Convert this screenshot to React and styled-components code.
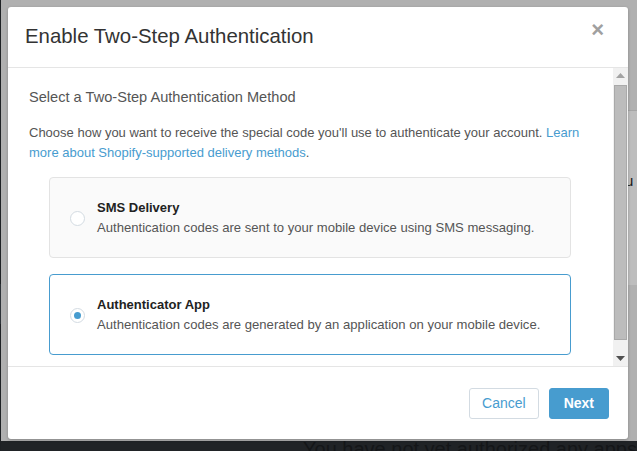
import styled, { createGlobalStyle } from "styled-components";

const GlobalStyle = createGlobalStyle`
  html, body {
    margin: 0;
    padding: 0;
  }
  body {
    font-family: "Liberation Sans", Arial, sans-serif;
    background: #202326;
  }
  * {
    box-sizing: border-box;
  }
`;

const Page = styled.div`
  position: relative;
  width: 637px;
  height: 451px;
  display: flex;
  overflow: hidden;
`;

const Sidebar = styled.div`
  width: 14px;
  background: #1e2124;
  display: flex;
  flex-direction: column;
  padding-top: 284px;
`;

const SideItem = styled.div`
  height: 40px;
  background: #2d3338;
`;

const Main = styled.div`
  flex: 1;
  display: flex;
  flex-direction: column;
`;

const DimTop = styled.div`
  height: 441px;
  background: #b0b0b0;
  display: flex;
  justify-content: flex-end;
`;

const DimCard = styled.div`
  width: 12px;
  margin-top: 110px;
  height: 175px;
  background: #bdbdbd;
  border-top: 1px solid #a5a5a5;
  padding-top: 60px;
  font-size: 15px;
  line-height: 20px;
  color: #1a1a1a;
  overflow: hidden;
  white-space: nowrap;
`;

const DimBottom = styled.div`
  flex: 1;
  background: #202326;
  color: #141618;
  font-size: 20px;
  padding-left: 302px;
  white-space: nowrap;
  overflow: hidden;
  line-height: 16px;
`;

const Modal = styled.div`
  position: absolute;
  left: 8px;
  top: 7px;
  width: 620px;
  height: 432px;
  background: #fff;
  border-radius: 3px;
  display: flex;
  flex-direction: column;
  box-shadow: 0 1px 3px rgba(0, 0, 0, 0.25);
`;

const Header = styled.div`
  height: 61px;
  padding: 0 24px 0 17px;
  border-bottom: 1px solid #e5e5e5;
  display: flex;
  align-items: center;
  justify-content: space-between;
`;

const Title = styled.h1`
  margin: 0;
  font-size: 20.4px;
  font-weight: 400;
  color: #333;
  padding-bottom: 1px;
`;

const Close = styled.span`
  font-size: 22px;
  font-weight: 700;
  color: #a0a0a0;
  line-height: 1;
  margin-top: -14px;
`;

const Body = styled.div`
  height: 299px;
  display: flex;
  border-bottom: 1px solid #e5e5e5;
`;

const Content = styled.div`
  flex: 1;
  overflow: hidden;
  padding: 19px 22px 0 21px;
`;

const ScrollTrack = styled.div`
  width: 15px;
  background: #f1f1f1;
  display: flex;
  flex-direction: column;
  align-items: center;
`;

const ScrollButton = styled.div`
  height: 15px;
  width: 15px;
  display: flex;
  align-items: center;
  justify-content: center;
`;

const Thumb = styled.div`
  width: 13px;
  height: 255px;
  margin: 2px 0 11px;
  background: #bcbcbc;
  border: 1px solid #a9a9a9;
`;

const Subtitle = styled.h2`
  margin: 0;
  font-size: 14.6px;
  line-height: 20px;
  font-weight: 400;
  color: #555;
`;

const Text = styled.p`
  margin: 16px 0 14px;
  font-size: 13px;
  line-height: 20px;
  color: #555;
`;

const Link = styled.a`
  color: #479ccf;
  text-decoration: none;
`;

const Options = styled.div`
  display: flex;
  flex-direction: column;
  gap: 16px;
  margin: 0 20px;
`;

const Option = styled.label`
  display: flex;
  align-items: center;
  gap: 12px;
  height: 81px;
  padding: 0 20px;
  border-radius: 4px;
  border: 1px solid ${(p) => (p.$selected ? "#479ccf" : "#e3e3e3")};
  background: ${(p) => (p.$selected ? "#fff" : "#fafafa")};
`;

const Radio = styled.span`
  width: 15px;
  height: 15px;
  border-radius: 50%;
  border: 1px solid #d3dbe2;
  background: #fff;
  display: flex;
  align-items: center;
  justify-content: center;
  flex-shrink: 0;
  margin-top: 1px;

  &::after {
    content: "";
    width: 7px;
    height: 7px;
    border-radius: 50%;
    background: ${(p) => (p.$checked ? "#479ccf" : "transparent")};
  }
`;

const OptionText = styled.div`
  display: flex;
  flex-direction: column;
`;

const OptionTitle = styled.strong`
  font-size: 13px;
  line-height: 20px;
  font-weight: 700;
  color: #222;
`;

const OptionDesc = styled.span`
  font-size: 13.1px;
  line-height: 20px;
  color: #555;
`;

const Footer = styled.div`
  flex: 1;
  display: flex;
  justify-content: flex-end;
  align-items: center;
  gap: 10px;
  padding: 0 19px 0 0;
`;

const Button = styled.button`
  height: 31px;
  padding: 0 ${(p) => (p.$primary ? "14px" : "12px")};
  font-family: "Liberation Sans", Arial, sans-serif;
  font-size: 14px;
  font-weight: ${(p) => (p.$primary ? 700 : 400)};
  border-radius: 3px;
  border: 1px solid ${(p) => (p.$primary ? "#479ccf" : "#d3dbe2")};
  background: ${(p) => (p.$primary ? "#479ccf" : "#fff")};
  color: ${(p) => (p.$primary ? "#fff" : "#479ccf")};
  cursor: pointer;
`;

const Arrow = ({ down }) => (
  <svg width="9" height="5" viewBox="0 0 9 5">
    <path
      d={down ? "M0 0 L9 0 L4.5 5 Z" : "M0 5 L9 5 L4.5 0 Z"}
      fill={down ? "#505050" : "#a3a3a3"}
    />
  </svg>
);

const methods = [
  {
    id: "sms",
    title: "SMS Delivery",
    desc: "Authentication codes are sent to your mobile device using SMS messaging.",
  },
  {
    id: "app",
    title: "Authenticator App",
    desc: "Authentication codes are generated by an application on your mobile device.",
  },
];

export default function App() {
  const selected = "app";
  return (
    <>
      <GlobalStyle />
      <Page>
        <Sidebar>
          <SideItem />
        </Sidebar>
        <Main>
          <DimTop>
            <DimCard>u</DimCard>
          </DimTop>
          <DimBottom>You have not yet authorized any apps</DimBottom>
        </Main>

        <Modal>
          <Header>
            <Title>Enable Two-Step Authentication</Title>
            <Close>×</Close>
          </Header>
          <Body>
            <Content>
              <Subtitle>Select a Two-Step Authentication Method</Subtitle>
              <Text>
                Choose how you want to receive the special code you'll use to
                authenticate your account.{" "}
                <Link href="#">
                  Learn more about Shopify-supported delivery methods
                </Link>
                .
              </Text>
              <Options>
                {methods.map((m) => (
                  <Option key={m.id} $selected={m.id === selected}>
                    <Radio $checked={m.id === selected} />
                    <OptionText>
                      <OptionTitle>{m.title}</OptionTitle>
                      <OptionDesc>{m.desc}</OptionDesc>
                    </OptionText>
                  </Option>
                ))}
              </Options>
            </Content>
            <ScrollTrack>
              <ScrollButton>
                <Arrow />
              </ScrollButton>
              <Thumb />
              <ScrollButton>
                <Arrow down />
              </ScrollButton>
            </ScrollTrack>
          </Body>
          <Footer>
            <Button>Cancel</Button>
            <Button $primary>Next</Button>
          </Footer>
        </Modal>
      </Page>
    </>
  );
}
